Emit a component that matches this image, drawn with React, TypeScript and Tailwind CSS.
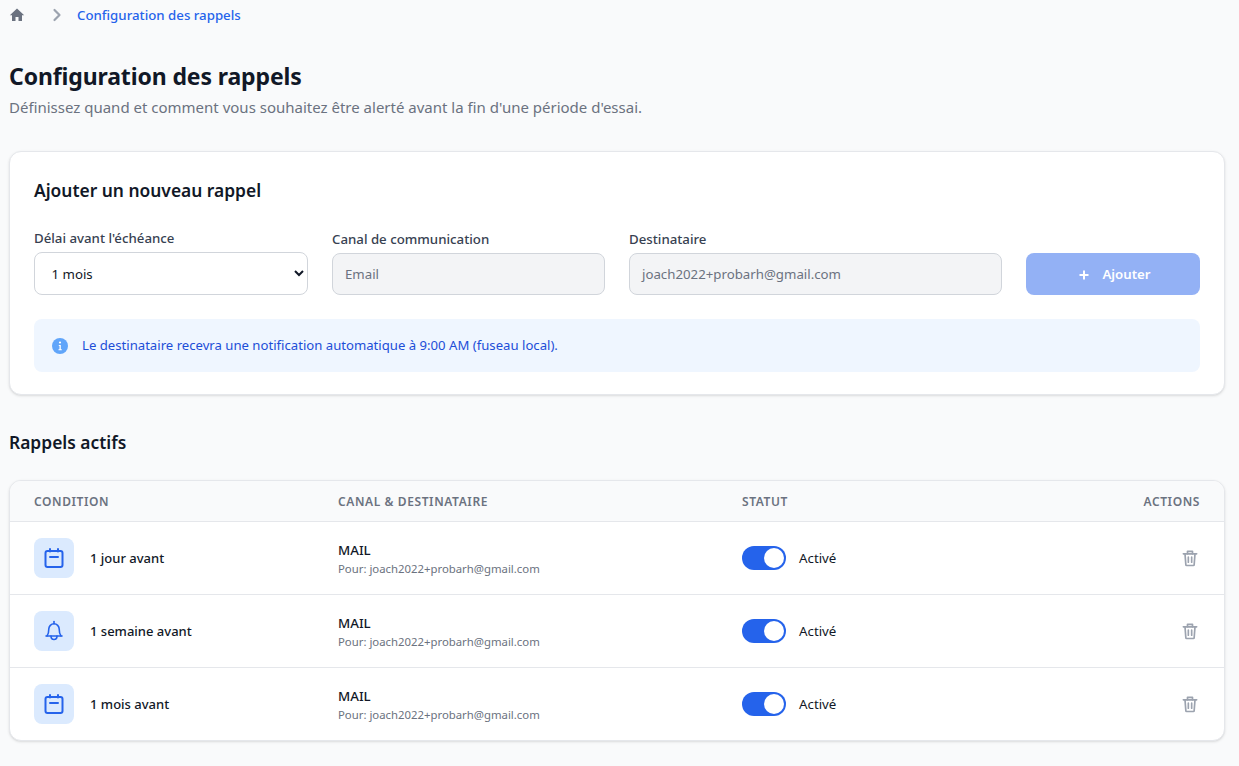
const rows = [
  { label: "1 jour avant", icon: "cal" },
  { label: "1 semaine avant", icon: "bell" },
  { label: "1 mois avant", icon: "cal" },
];

function HomeIcon() {
  return (
    <svg viewBox="0 0 16 16" className="h-4 w-4 text-[#6b7280]" fill="currentColor">
      <path d="M8 1.500L.8 8.200h2.200v5.800h3.500v-4h3v4h3.500V8.200h2.200z" />
    </svg>
  );
}

function CalendarIcon() {
  return (
    <svg viewBox="0 0 24 24" className="h-6 w-6" fill="none" stroke="currentColor" strokeWidth={2} strokeLinecap="round" strokeLinejoin="round">
      <rect x="3.500" y="5" width="17" height="16" rx="2" />
      <path d="M8 3v2.500M16 3v2.500M8 11h8" />
    </svg>
  );
}

function BellIcon() {
  return (
    <svg viewBox="0 0 24 24" className="h-6 w-6" fill="none" stroke="currentColor" strokeWidth={1.6} strokeLinecap="round" strokeLinejoin="round">
      <path d="M4 17h16" />
      <path d="M5 17c1.200-1.500 1.800-3 1.800-7a5.200 5.200 0 0 1 10.400 0c0 4 .6 5.500 1.800 7" />
      <path d="M12 2.500v2.300" />
      <path d="M9 17a3 3.500 0 0 0 6 0" />
    </svg>
  );
}

function TrashIcon() {
  return (
    <svg viewBox="0 0 24 24" className="h-5 w-5 text-[#9ca3af]" fill="none" stroke="currentColor" strokeWidth={2} strokeLinecap="round" strokeLinejoin="round">
      <path d="M4 7h16" />
      <path d="M9 7V4h6v3" />
      <path d="M6 7l1 13a1 1 0 0 0 1 1h8a1 1 0 0 0 1-1l1-13" />
      <path d="M10 11v6M14 11v6" />
    </svg>
  );
}

function InfoIcon() {
  return (
    <svg viewBox="0 0 16 16" className="h-4 w-4 shrink-0">
      <circle cx="8" cy="8" r="8" fill="#60a5fa" />
      <circle cx="8" cy="4.500" r="1.100" fill="#fff" />
      <path d="M6.800 7h2v4.200h1v1H6.500v-1h1V8h-.7z" fill="#fff" />
    </svg>
  );
}

function PlusIcon() {
  return (
    <svg viewBox="0 0 14 14" className="h-[14px] w-[14px]" fill="none" stroke="currentColor" strokeWidth={2}>
      <path d="M7 2.500v9M2.500 7h9" />
    </svg>
  );
}

function ChevronIcon() {
  return (
    <svg viewBox="0 0 16 16" className="ml-[24px] h-4 w-4 text-[#9ca3af]" fill="none" stroke="currentColor" strokeWidth={2.200} strokeLinecap="round" strokeLinejoin="round">
      <path d="M5.500 3l5 5-5 5" />
    </svg>
  );
}

export default function App() {
  return (
    <div className="min-h-[766px] bg-[#f9fafb] pl-[9px] pr-[14px] font-['Noto_Sans',sans-serif] text-[#111827]">
      <nav className="flex h-[30px] items-center">
        <HomeIcon />
        <ChevronIcon />
        <span className="ml-[12px] mt-[2px] text-[13.25px] font-medium text-[#2563eb]">Configuration des rappels</span>
      </nav>

      <h1 className="mt-[30px] text-[23px] font-bold leading-8 tracking-[-0.12px]">Configuration des rappels</h1>
      <p className="mt-[3px] text-[15px] leading-6 text-[#6b7280]">
        Définissez quand et comment vous souhaitez être alerté avant la fin d'une période d'essai.
      </p>

      <section className="mt-[32px] h-[244px] rounded-xl border border-[#e5e7eb] bg-white px-6 py-6 shadow-sm">
        <h2 className="text-[17.4px] font-semibold leading-7">Ajouter un nouveau rappel</h2>
        <div className="mt-[24px] grid grid-cols-[274px_273px_373px_174px] items-end gap-6">
          <label className="block">
            <span className="mb-[4px] block text-[13.25px] font-medium leading-5 text-[#374151]">Délai avant l'échéance</span>
            <select className="h-[43px] w-full rounded-lg border border-[#d1d5db] bg-white pl-[12.5px] pr-3 text-[13.25px] text-[#111827]">
              <option>1 mois</option>
            </select>
          </label>
          <label className="block">
            <span className="mb-[4px] block text-[13.25px] font-medium leading-5 text-[#374151]">Canal de communication</span>
            <div className="flex h-[42px] items-center rounded-lg border border-[#d1d5db] bg-[#f3f4f6] px-3 pt-[2px] text-[13.25px] text-[#6b7280]">Email</div>
          </label>
          <label className="block">
            <span className="mb-[4px] block text-[13.25px] font-medium leading-5 text-[#374151]">Destinataire</span>
            <div className="flex h-[42px] items-center rounded-lg border border-[#d1d5db] bg-[#f3f4f6] px-3 pt-[2px] text-[13.25px] text-[#6b7280]">joach2022+probarh@gmail.com</div>
          </label>
          <button className="flex h-[42px] items-center justify-center gap-[11px] rounded-lg bg-[#93b1f5] pl-[2px] pt-[2px] text-[13.25px] font-semibold text-white">
            <PlusIcon />
            Ajouter
          </button>
        </div>
        <div className="mt-6 flex h-[53px] items-center gap-[14px] rounded-lg bg-[#eff6ff] px-[18px] text-[13.15px] text-[#1d4ed8]">
          <InfoIcon />
          Le destinataire recevra une notification automatique à 9:00 AM (fuseau local).
        </div>
      </section>

      <h2 className="mt-[33px] text-[17.4px] font-semibold leading-7">Rappels actifs</h2>

      <section className="mt-[24px] overflow-hidden rounded-xl border border-[#e5e7eb] bg-white shadow-sm">
        <div className="grid h-[41px] grid-cols-[304px_404px_1fr_auto] items-center border-b border-[#e5e7eb] bg-[#f9fafb] px-6 pt-[2px] text-xs font-semibold tracking-wider text-[#6b7280]">
          <span>CONDITION</span>
          <span>CANAL &amp; DESTINATAIRE</span>
          <span>STATUT</span>
          <span>ACTIONS</span>
        </div>
        {rows.map((r, i) => (
          <div key={r.label} className={`grid grid-cols-[304px_404px_1fr_auto] items-center px-6 ${i < 2 ? "h-[73px] border-b border-[#e5e7eb]" : "h-[72px]"}`}>
            <div className="flex items-center gap-4">
              <div className="flex h-10 w-10 items-center justify-center rounded-lg bg-[#dbeafe] text-[#2563eb]">
                {r.icon === "cal" ? <CalendarIcon /> : <BellIcon />}
              </div>
              <span className="mt-[2px] text-[13px] font-medium">{r.label}</span>
            </div>
            <div className="pt-[1px]">
              <div className="mb-[1px] text-[13.3px] font-medium leading-5">MAIL</div>
              <div className="text-[11.35px] leading-4 text-[#6b7280]">Pour: joach2022+probarh@gmail.com</div>
            </div>
            <div className="flex items-center gap-[13px]">
              <div className="relative h-6 w-11 rounded-full bg-[#2563eb]">
                <div className="absolute right-[2px] top-[2px] h-5 w-5 rounded-full bg-white" />
              </div>
              <span className="mt-[2px] text-[13.3px]">Activé</span>
            </div>
            <div className="flex justify-end">
              <TrashIcon />
            </div>
          </div>
        ))}
      </section>
    </div>
  );
}
